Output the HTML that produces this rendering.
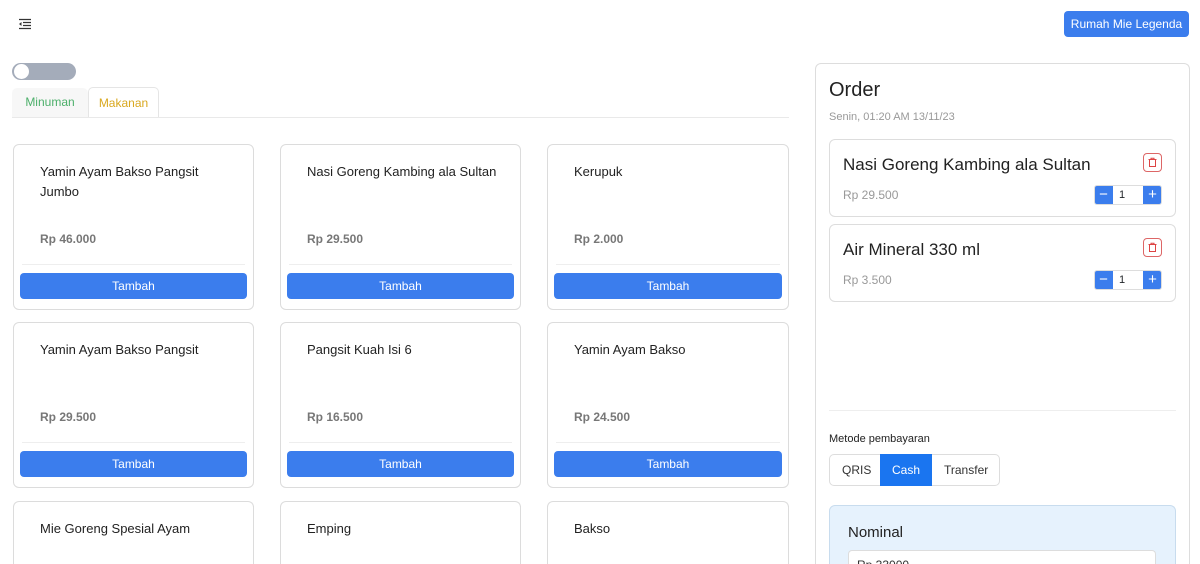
<!DOCTYPE html>
<html style="width:1200px;height:564px;overflow:hidden"><head><meta charset="utf-8"><style>
*{box-sizing:border-box;margin:0;padding:0}
body{width:1200px;height:564px;overflow:hidden;background:#fff;font-family:"Liberation Sans",sans-serif;position:relative;color:#212529}
.a{position:absolute}
.card{position:absolute;width:241px;height:166px;border:1px solid #dcdcdc;border-radius:6px;background:#fff}
.card .t{position:absolute;left:26px;top:17px;font-size:13px;line-height:20px;color:#222;width:200px}
.card .p{position:absolute;left:26px;top:87px;font-size:12px;color:#777;font-weight:bold}
.card .hr{position:absolute;left:8px;right:8px;top:119px;border-top:1px solid #eee}
.card .b{position:absolute;left:6px;right:6px;top:128px;height:26px;background:#3b7ded;color:#fff;border-radius:4px;font-size:12px;text-align:center;line-height:26px}
.item{position:absolute;left:829px;width:347px;height:78px;border:1px solid #ddd;border-radius:6px}
.item .n{position:absolute;left:13px;top:15px;font-size:17px;color:#222}
.item .pr{position:absolute;left:13px;top:48px;font-size:12px;color:#999}
.item .tr{position:absolute;right:13px;top:13px;width:19px;height:19px;border:1px solid #d66;border-radius:4px}
.qty{position:absolute;right:13px;top:45px;width:68px;height:20px;border:1px solid #ddd;border-radius:3px;overflow:hidden;font-size:11px}
.qty .m,.qty .pl{position:absolute;top:-1px;width:19px;height:20px;background:#3b7ded;color:#fff;text-align:center;line-height:19px;font-size:15px}
.qty .m{left:-1px}.qty .pl{right:-1px}
.qty .v{position:absolute;left:24px;top:3px}
</style></head><body>
<svg class="a" style="left:18px;top:18px" width="14" height="12" viewBox="0 0 14 12"><path d="M1 1.5h12M5 4.5h8M5 7.5h8M1 10.5h12" stroke="#333" stroke-width="1.3"/><path d="M1 6l2.5-2v4z" fill="#333"/></svg>
<div class="a" style="left:1064px;top:11px;width:125px;height:26px;background:#3b7ded;border-radius:4px;color:#fff;font-size:12px;text-align:center;line-height:26px">Rumah Mie Legenda</div>
<div class="a" style="left:12px;top:63px;width:64px;height:17px;border-radius:9px;background:#a4acba"></div>
<div class="a" style="left:14px;top:64px;width:15px;height:15px;border-radius:50%;background:#fff"></div>
<div class="a" style="left:12px;top:88px;width:76px;height:30px;background:#f7f7f7;border-radius:5px 5px 0 0;color:#4caf6a;font-size:12px;text-align:center;line-height:29px">Minuman</div>
<div class="a" style="left:88px;top:87px;width:71px;height:31px;border:1px solid #e5e5e5;border-bottom:none;border-radius:5px 5px 0 0;color:#d9a81f;font-size:12px;text-align:center;line-height:30px">Makanan</div>
<div class="a" style="left:12px;top:117px;width:777px;border-top:1px solid #e9e9e9"></div>

<div class="card" style="left:13px;top:144px"><div class="t">Yamin Ayam Bakso Pangsit Jumbo</div><div class="p">Rp 46.000</div><div class="hr"></div><div class="b">Tambah</div></div>
<div class="card" style="left:280px;top:144px"><div class="t">Nasi Goreng Kambing ala Sultan</div><div class="p">Rp 29.500</div><div class="hr"></div><div class="b">Tambah</div></div>
<div class="card" style="left:547px;top:144px;width:242px"><div class="t">Kerupuk</div><div class="p">Rp 2.000</div><div class="hr"></div><div class="b">Tambah</div></div>
<div class="card" style="left:13px;top:322px"><div class="t">Yamin Ayam Bakso Pangsit</div><div class="p">Rp 29.500</div><div class="hr"></div><div class="b">Tambah</div></div>
<div class="card" style="left:280px;top:322px"><div class="t">Pangsit Kuah Isi 6</div><div class="p">Rp 16.500</div><div class="hr"></div><div class="b">Tambah</div></div>
<div class="card" style="left:547px;top:322px;width:242px"><div class="t">Yamin Ayam Bakso</div><div class="p">Rp 24.500</div><div class="hr"></div><div class="b">Tambah</div></div>
<div class="card" style="left:13px;top:501px;height:63px;border-bottom:none;border-radius:6px 6px 0 0"><div class="t">Mie Goreng Spesial Ayam</div></div>
<div class="card" style="left:280px;top:501px;height:63px;border-bottom:none;border-radius:6px 6px 0 0"><div class="t">Emping</div></div>
<div class="card" style="left:547px;top:501px;width:242px;height:63px;border-bottom:none;border-radius:6px 6px 0 0"><div class="t">Bakso</div></div>

<div class="a" style="left:815px;top:63px;width:375px;height:501px;border:1px solid #ddd;border-bottom:none;border-radius:6px 6px 0 0"></div>
<div class="a" style="left:829px;top:79px;font-size:20px;color:#222">Order</div>
<div class="a" style="left:829px;top:111px;font-size:11px;color:#999">Senin, 01:20 AM 13/11/23</div>
<div class="item" style="top:139px"><div class="n">Nasi Goreng Kambing ala Sultan</div><div class="pr">Rp 29.500</div><div class="tr"><svg width="17" height="17" viewBox="0 0 17 17"><path d="M5.5 5.5h6v7h-6zM4.5 5.5h8M7 5.5v-1.2h3v1.2" fill="none" stroke="#d44" stroke-width="1"/></svg></div><div class="qty"><div class="m">−</div><div class="v">1</div><div class="pl">+</div></div></div>
<div class="item" style="top:224px"><div class="n">Air Mineral 330 ml</div><div class="pr">Rp 3.500</div><div class="tr"><svg width="17" height="17" viewBox="0 0 17 17"><path d="M5.5 5.5h6v7h-6zM4.5 5.5h8M7 5.5v-1.2h3v1.2" fill="none" stroke="#d44" stroke-width="1"/></svg></div><div class="qty"><div class="m">−</div><div class="v">1</div><div class="pl">+</div></div></div>
<div class="a" style="left:829px;top:410px;width:347px;border-top:1px solid #eee"></div>
<div class="a" style="left:829px;top:433px;font-size:11px;color:#222">Metode pembayaran</div>
<div class="a" style="left:829px;top:454px;width:171px;height:32px;border:1px solid #ddd;border-radius:5px;font-size:12px;color:#333">
<span class="a" style="left:12px;top:8px">QRIS</span>
<div class="a" style="left:50px;top:-1px;width:52px;height:32px;background:#1a75f0;color:#fff;text-align:center;line-height:32px">Cash</div>
<span class="a" style="left:114px;top:8px">Transfer</span></div>
<div class="a" style="left:829px;top:505px;width:347px;height:59px;background:#e6f2fd;border:1px solid #c8dcee;border-bottom:none;border-radius:6px 6px 0 0"></div>
<div class="a" style="left:848px;top:524px;font-size:15px;color:#222">Nominal</div>
<div class="a" style="left:848px;top:550px;width:308px;height:14px;background:#fff;border:1px solid #ddd;border-bottom:none;border-radius:4px 4px 0 0;overflow:hidden;font-size:12px;padding:8px 8px 0;color:#333;line-height:12px">Rp 33000</div>
</body></html>
